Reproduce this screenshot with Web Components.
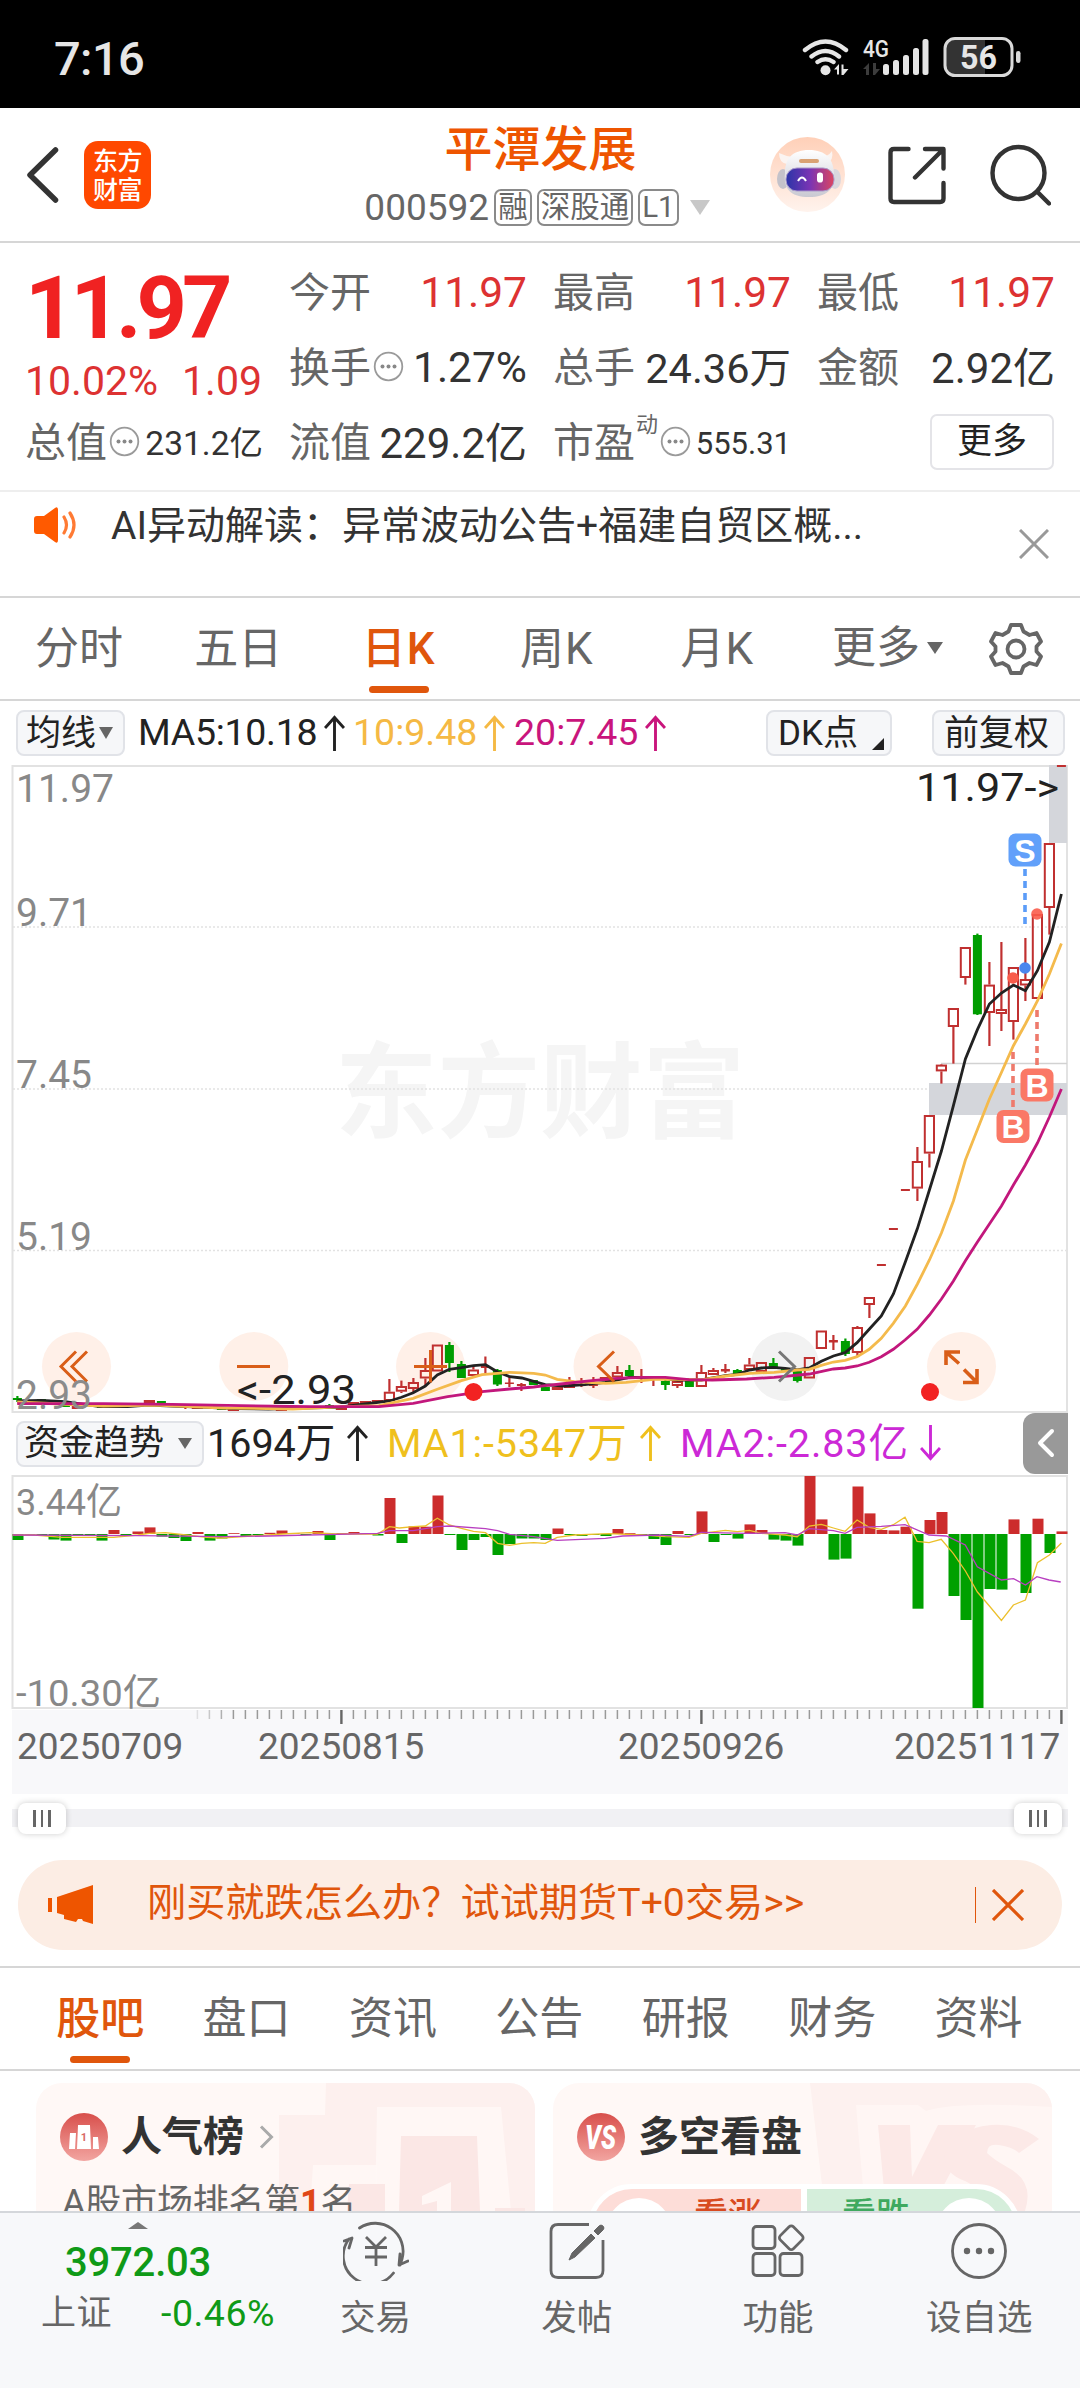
<!DOCTYPE html>
<html lang="zh-CN">
<head>
<meta charset="utf-8">
<title>平潭发展 000592</title>
<style>
  body{margin:0;width:1080px;height:2388px;overflow:hidden;background:#fff;color:#333;
    font-family:Roboto,"Noto Sans CJK SC",sans-serif;font-size:37px;line-height:1;
    display:flex;flex-direction:column;white-space:nowrap}
</style>
</head>
<body>
<status-bar></status-bar>
<app-header></app-header>
<quote-panel></quote-panel>
<news-strip>AI异动解读：异常波动公告+福建自贸区概...</news-strip>
<period-tabs></period-tabs>
<ma-bar></ma-bar>
<kline-chart></kline-chart>
<flow-bar></flow-bar>
<flow-chart></flow-chart>
<time-axis></time-axis>
<range-slider></range-slider>
<promo-banner>刚买就跌怎么办？试试期货T+0交易&gt;&gt;</promo-banner>
<info-tabs></info-tabs>
<feature-cards></feature-cards>
<bottom-bar></bottom-bar>

<script>
const define=(name,html,after)=>customElements.define(name,class extends HTMLElement{
  connectedCallback(){
    if(this.shadowRoot)return;
    this.attachShadow({mode:'open'}).innerHTML='<style>:host,*{box-sizing:border-box}svg{display:block;flex:none}</style>'+(typeof html==='function'?html(this):html);
    if(after)after(this.shadowRoot,this);
  }
});

define('status-bar',`<style>
:host{display:flex;height:108px;flex:none;background:#000;color:#e6e6e6;align-items:center;justify-content:space-between;padding:9px 58px 0 54px}
.t{font-size:47px;font-weight:500;letter-spacing:-.6px}
svg{margin-bottom:3px}
</style><span class="t">7:16</span>
<svg width="222" height="50" viewBox="800 32 222 50" fill="none">
<g stroke="#e6e6e6" stroke-width="4.4" stroke-linecap="round"><path d="M805 50Q825.500 33 846 50M811.500 56.500Q825.500 45.500 839 56.500M817.500 62Q825.500 56.500 833.500 62"/></g>
<circle cx="825.500" cy="70.300" r="5" fill="#e6e6e6"/>
<path d="M834 69.500l5-5.500v10.500h-2V69.500zM841.500 64.500h2v4.500h5l-5 6h-2z" fill="#e6e6e6"/>
<text x="863" y="56.500" font-size="24" font-weight="500" fill="#e6e6e6" textLength="26" lengthAdjust="spacingAndGlyphs" font-family="Roboto">4G</text>
<path d="M863 69l6-6v12h-3v-6zM873 63h3v6h4l-5 6h-2z" fill="#3c3c3c"/>
<g fill="#e6e6e6"><rect x="883" y="64" width="6" height="11" rx="2.500"/><rect x="893" y="60" width="6" height="15" rx="2.500"/><rect x="903" y="55" width="6" height="20" rx="2.500"/><rect x="913" y="48" width="6" height="27" rx="2.500"/><rect x="922.500" y="39" width="6" height="36" rx="2.500"/></g>
<path d="M953 40h32v34h-32q-8 0-8-8V48q0-8 8-8z" fill="#333"/>
<rect x="945" y="38.500" width="67" height="37" rx="10" stroke="#d9d9d9" stroke-width="3"/>
<rect x="1016" y="51" width="4.500" height="12" rx="2.200" fill="#d9d9d9"/>
<text x="960" y="69" font-size="34" font-weight="700" fill="#e6e6e6" textLength="37" lengthAdjust="spacingAndGlyphs" font-family="Roboto">56</text></svg>`);

define('app-header',`<style>
:host{display:flex;height:135px;flex:none;border-bottom:2px solid #d6d6d6;justify-content:space-between;align-items:center;padding:0 28px 0 26px}
.l,.r{display:flex;align-items:center}
.l{gap:25px;width:300px}.r{width:282px;gap:41px;margin-left:34px}
.logo{width:67px;height:68px;border-radius:14px;background:#ff4800;color:#fff;font:500 25px/29px "Noto Sans CJK SC",sans-serif;text-align:center;padding-top:4px;letter-spacing:-.5px}
.c{flex:1;display:flex;flex-direction:column;align-items:center;padding-left:28px}
.n{font-size:48px;font-weight:500;color:#ee5500;height:66px;line-height:54px;margin-right:9px}
.s{display:flex;gap:5px;align-items:center;color:#666;height:38px;font-size:37px;margin-right:16px}
.s b{font-weight:400;border:2px solid #8a8a8a;border-radius:7px;font-size:29.500px;height:37px;line-height:33px;padding:0 2px;letter-spacing:0}
.s i{border:10.500px solid transparent;border-top:15px solid #c8c8c8;border-bottom:0;margin-left:6px}
</style>
<div class="l"><svg width="33" height="56" viewBox="0 0 33 56" fill="none" stroke="#333" stroke-width="5.500" stroke-linecap="round" stroke-linejoin="round"><path d="M29.500 3L4 28l25.500 25"/></svg>
<div class="logo"><div>东方</div><div>财富</div></div></div>
<div class="c"><div class="n">平潭发展</div><div class="s"><span>000592</span><b>融</b><b>深股通</b><b>L1</b><i></i></div></div>
<div class="r">
<svg width="75" height="75" viewBox="0 0 75 75"><defs><linearGradient id="a" x2="0" y2="1"><stop stop-color="#ffd0b8"/><stop offset="1" stop-color="#fff3ed"/></linearGradient><linearGradient id="v"><stop stop-color="#2b35a8"/><stop offset=".5" stop-color="#7a34b4"/><stop offset="1" stop-color="#dc4560"/></linearGradient><linearGradient id="h" x2="0" y2="1"><stop stop-color="#fff"/><stop offset="1" stop-color="#c9c9d2"/></linearGradient></defs>
<circle cx="37.500" cy="37.500" r="37.500" fill="url(#a)"/>
<ellipse cx="13" cy="42" rx="6" ry="10" fill="#c4c2ca"/><ellipse cx="65" cy="42" rx="6" ry="10" fill="#d9d7dd"/>
<path d="M9 16q0 10 8 11l6-7q-8-1-14-4zM62 14q2 9-5 12l-7-6q8 0 12-6z" fill="#fbf4f1"/>
<path d="M39 13C22 13 15 22 15 36c-2 16 6 24 24 24s26-8 25-22C64 22 56 13 39 13z" fill="url(#h)"/>
<rect x="29" y="22" width="20" height="4" rx="2" fill="#d9a274"/>
<rect x="16" y="31" width="48" height="23" rx="11" fill="url(#v)" stroke="#a99acb" stroke-width="1"/>
<path d="M28 44q4-7 8 0" fill="none" stroke="#fff" stroke-width="2"/><rect x="47" y="35.500" width="6" height="10" rx="2.800" fill="#fff"/></svg>
<svg width="60" height="60" viewBox="0 0 60 60" fill="none" stroke="#333" stroke-width="4.400" stroke-linecap="round" stroke-linejoin="round"><path d="M22.500 4H8q-3.500 0-3.500 3.500v46Q4.500 57 8 57h46q3.500 0 3.500-3.500V38M39 4h18.500v19.500M57 4.500L29 32.500"/></svg>
<svg width="64" height="62" viewBox="0 0 64 62" fill="none" stroke="#333" stroke-width="4.400" stroke-linecap="round"><circle cx="31.500" cy="29" r="26"/><path d="M51 48.500l11 11"/></svg>
</div>`);

define('info-dot',`<style>:host{display:inline-block;flex:none}</style><svg width="31" height="31" viewBox="0 0 31 31"><circle cx="15.500" cy="15.500" r="13.800" fill="none" stroke="#9a9a9a" stroke-width="1.800"/><g fill="#888"><circle cx="9.500" cy="15.500" r="2"/><circle cx="15.500" cy="15.500" r="2"/><circle cx="21.500" cy="15.500" r="2"/></g></svg>`);

define('quote-cell',e=>`<style>
:host{display:flex;align-items:center;justify-content:space-between}
.k{font-size:41px;color:#666;display:flex;align-items:center}
.v{font-size:${e.getAttribute('size')||42.5}px;color:${e.getAttribute('color')||'#333'};margin-right:-1px}
info-dot{margin:-4px 0 0 2px}
sup{font-size:22px;margin:-38px 0 0 1px;align-self:center;line-height:22px}
</style><span class="k">${e.getAttribute('label')}${e.hasAttribute('sup')?`<sup>${e.getAttribute('sup')}</sup>`:''}${e.hasAttribute('dot')?'<info-dot></info-dot>':''}</span><span class="v"><slot></slot></span>`);

define('quote-panel',`<style>
:host{display:grid;height:249px;flex:none;border-bottom:2px solid #eee;grid-template-columns:repeat(4,237px);column-gap:27px;grid-template-rows:repeat(3,75px);padding:13px 0 0 25px;align-content:start}
.p{grid-row:span 2;color:#dd3232;display:flex;flex-direction:column}
.p b{font-size:88px;color:#f02222;line-height:88px;letter-spacing:-5px;padding-top:8px;white-space:nowrap}
.p div{display:flex;justify-content:space-between;font-size:41px;margin-top:9px}
.m{justify-self:end;align-self:center;width:124px;height:56px;border:2px solid #e4e4e8;border-radius:7px;font-size:35px;display:flex;align-items:center;justify-content:center;margin-top:-4px;color:#222}
</style>
<div class="p"><b>11.97</b><div><span>10.02%</span><span>1.09</span></div></div>
<quote-cell label="今开" color="#dd3232">11.97</quote-cell><quote-cell label="最高" color="#dd3232">11.97</quote-cell><quote-cell label="最低" color="#dd3232">11.97</quote-cell>
<quote-cell label="换手" dot>1.27%</quote-cell><quote-cell label="总手" size="41.500">24.36万</quote-cell><quote-cell label="金额" size="42">2.92亿</quote-cell>
<quote-cell label="总值" dot size="33.500">231.2亿</quote-cell><quote-cell label="流值" size="42">229.2亿</quote-cell><quote-cell label="市盈" sup="动" dot size="31">555.31</quote-cell>
<div class="m">更多</div>`);

define('news-strip',`<style>
:host{display:flex;height:106px;flex:none;border-bottom:2px solid #d6d6d6;padding:0 31px 0 34px;align-items:flex-start}
span{flex:1;font-size:39px;line-height:68px;margin-left:33px}
.i{margin-top:15px}.x{margin-top:37px}
</style><svg class="i" width="44" height="36" viewBox="0 0 44 36"><path d="M3 9h7L21 1q3-2 3 2v30q0 4-3 2L10 27H3q-3 0-3-3V12q0-3 3-3z" fill="#ff5a00"/><path d="M30 10q5 8 0 16M36 6q8 12 0 24" fill="none" stroke="#ff7a33" stroke-width="3.200" stroke-linecap="round"/></svg><span><slot></slot></span>
<svg class="x" width="30" height="30" viewBox="0 0 30 30" stroke="#999" stroke-width="3"><path d="M1 1l28 28M29 1L1 29"/></svg>`);

define('tab-item',e=>`<style>
:host{display:flex;flex-direction:column;align-items:center;color:#666;font-size:44px;position:relative;justify-content:center}
:host([on]){color:#e0560c;font-weight:${e.getAttribute('w')||400}}
i{display:none;position:absolute;bottom:6px;width:60px;height:7px;border-radius:4px;background:#e0560c}
:host([on]) i{display:block}
</style><span><slot></slot></span><i></i>`);

define('period-tabs',`<style>
:host{display:flex;height:103px;flex:none;border-bottom:2px solid #d6d6d6}
tab-item{width:160.500px}
tab-item:nth-of-type(1){width:158px}
tab-item:nth-of-type(n+4){padding-right:5px}
tab-item:nth-of-type(n+3){letter-spacing:1px}
.m{width:189px;display:flex;align-items:center;padding:0 0 1px 32px;font-size:44px;color:#666}
.m i{border:8px solid transparent;border-top:12px solid #666;border-bottom:0;margin-left:7px}
.g{margin:24px 0 0 0}
</style><tab-item>分时</tab-item><tab-item>五日</tab-item><tab-item on w="500">日K</tab-item><tab-item>周K</tab-item><tab-item>月K</tab-item><div class="m">更多<i></i></div>
<svg class="g" width="54" height="54" viewBox="-27 -27 54 54" fill="none" stroke="#666" stroke-width="3.800" stroke-linejoin="round"><path d="M-5-24H5L7.500-17.500 13.500-14 20.500-16 25-7.500 20.500-2.500V2.500L25 7.500 20.500 16 13.500 14 7.500 17.500 5 24H-5L-7.500 17.500-13.500 14-20.500 16-25 7.500-20.500 2.500V-2.500L-25-7.500-20.500-16-13.500-14-7.500-17.500Z"/><circle r="8.500"/></svg>`);

define('chip-box',`<style>
:host{display:flex;align-items:center;height:46px;border:2px solid #e1e3e8;border-radius:8px;background:#f6f7f9;font-size:35px;color:#222;padding:0 8px;flex:none}
</style><slot></slot>`);

const arrow=(c,down)=>`<svg width="21" height="36" viewBox="0 0 21 36" fill="none" stroke="${c}" stroke-width="2.900" ${down?'style="transform:scaleY(-1)"':''}><path d="M10.500 36V3M1 13l9.500-10.500L20 13"/></svg>`;

define('ma-bar',`<style>
:host{display:flex;height:64px;flex:none;align-items:center;padding-left:16px;padding-right:15px}
.a{width:109px}.a i{border:7.500px solid transparent;border-top:12px solid #666;border-bottom:0;margin-left:3px}
span{display:flex;align-items:center;gap:7px;font-size:37.500px}
.b{width:126px;margin-left:auto;padding-left:10px;position:relative}
.b i{position:absolute;right:6px;bottom:4px;border:6px solid #222;border-left-color:transparent;border-top-color:transparent}
.c{width:133px;margin-left:40px;padding-left:10px}
</style><chip-box class="a">均线<i></i></chip-box>
<span style="color:#222;margin-left:13px;width:204px;letter-spacing:-.3px">MA5:10.18${arrow('#222')}</span><span style="margin-left:11px;width:151px;color:#f5b944">10:9.48${arrow('#f5b944')}</span><span style="margin-left:10px;color:#c9157c">20:7.45${arrow('#c9157c')}</span>
<chip-box class="b">DK点<i></i></chip-box><chip-box class="c">前复权</chip-box>`);

const X=i=>+(17.4+12*i).toFixed(1);
const RED='#c03030',GREEN='#009d00';
/* candle rows: index, kind (r hollow, g filled, c thin cross), body top, body bottom, high, low */
const candles=[[0,'g',1398,1400,1396,1402],[2,'g',1399,1401],[4,'g',1405,1407],[5,'r',1406,1408],[7,'g',1406,1408],[8,'r',1405,1408],[11,'r',1400,1403],[12,'g',1401,1403],[14,'c',1405,1407,1404,1409],[15,'r',1406,1408],[16,'g',1406,1408],[17,'g',1407,1410],[18,'r',1408,1411],[20,'g',1408,1409],[22,'r',1408,1410],[26,'g',1405,1407,1404,1408],[27,'r',1407,1410],[28,'r',1402,1404],[29,'r',1401,1404],[30,'r',1400,1403],
[31,'r',1391.7,1401,1379],[32,'r',1386,1391.7,1380.6,1393],[33,'r',1382,1389,1378,1392],[34,'r',1370,1378.5,1358,1386],[35,'r',1344.5,1371.5],[36,'g',1345,1363,1342,1372],[37,'g',1364,1378,1361],[38,'r',1369.5,1376,1366,1378],[39,'c',1366,1368,1356.500,1373],[40,'g',1370,1384.5,1369,1386],[41,'c',1382.5,1384,1377,1387],[42,'c',1384,1386,1383,1391],[43,'g',1380,1385],
[44,'g',1387,1391],[45,'r',1386.7,1390],[46,'r',1385,1388,1377],[47,'c',1384,1385.5,1378,1387],[48,'c',1383,1386,1377,1388],[49,'r',1377,1381],[50,'r',1372,1377.5,1366],[51,'g',1370,1376,1365,1378],[52,'c',1376,1378,1369,1383],[53,'c',1379,1380,1377,1386],[54,'g',1381,1385,1380,1390],[55,'r',1381,1386,1379,1388],[56,'g',1381,1387],[57,'r',1372,1387,1365],[58,'r',1370,1375,1368],[59,'c',1369,1371.5,1364,1373],[60,'g',1370,1374,1369],[61,'r',1364.5,1370,1358],[62,'r',1362,1372],[63,'g',1363,1369,1358],[64,'g',1368,1371],[65,'g',1371,1381,1370,1382.5],[66,'r',1357,1378.5],[67,'r',1330.5,1349],[68,'c',1340,1342.5,1335,1350],[69,'g',1341,1354,1338.5,1356],[70,'r',1327,1353,1326,1356],[71,'r',1297,1305,1297,1318],[72,'c',1264,1266],[73,'c',1228,1230],[74,'c',1189,1191],[75,'r',1161,1188.6,1147,1201],[76,'r',1115,1153.6,1115,1167.5],[77,'r',1064.6,1071.4,1064,1083.6],[78,'r',1008,1027,1008,1063.6],[79,'r',947,978,947,984.6],[80,'g',935,1014.3,933.6,1015],[81,'r',984.6,1013,962,1046],[82,'r',1009,1014,942,1031],[83,'r',967,1022,967,1039.6],[84,'r',979,985.5,938,1001],[85,'r',914,999],[86,'r',843,908,843,934.6],[87,'c',765,767]];
const drawCandle=([i,k,t,b,h=t,l=b])=>{
  const x=X(i),c=k==='g'?GREEN:RED;let s='';
  if(k==='r'){
    if(h<t)s+=`<path d="M${x} ${h}V${t}" stroke="${c}" stroke-width="2.2"/>`;
    if(l>b)s+=`<path d="M${x} ${b}V${l}" stroke="${c}" stroke-width="2.2"/>`;
    s+=`<rect x="${x-4.6}" y="${t+1}" width="9.2" height="${Math.max(b-t-2,1)}" fill="none" stroke="${c}" stroke-width="2"/>`;
  }else{
    if(l>b||h<t)s+=`<path d="M${x} ${h}V${l}" stroke="${c}" stroke-width="2.2"/>`;
    s+=`<rect x="${x-4.5}" y="${t}" width="9" height="${b-t}" fill="${c}"/>`;
  }
  return s;
};
const L=(z,k=2.904)=>z.map(([a,b])=>[a/k,1290+b/3]);
const R=z=>z.map(([a,b])=>[540+a/2.904,1290+b/3]);
const from=(i,ys)=>ys.map((y,n)=>[X(i+n),y]);
const pts=a=>a.map(p=>p.map(v=>v.toFixed(1)).join()).join(' ');
const ma5=[...L([[50,333],[120,331],[190,335],[290,350],[370,350],[430,345],[500,348],[600,352],[680,356],[780,357],[870,354],[980,352],[1060,342],[1131,333],[1166,322],[1200,308],[1235,288],[1270,255],[1305,238],[1340,233],[1375,227],[1410,224],[1445,246],[1480,260],[1515,264],[1550,274]]),
...R([[15,284],[70,288],[130,284],[190,277],[260,262],[330,262],[400,270],[468,270],[538,257],[573,253],[608,240],[643,234],[678,232],[712,235],[747,240],[782,234],[817,214],[852,198],[886,188],[921,158],[956,118],[991,78]]),...from(73,[1294,1261.8,1228.6,1190,1151,1105.7,1059,1029.6,1004,993,985,990.7,970.7,942,894])];
const ma10=[...L([[50,336],[300,348],[450,345],[650,354],[850,357],[1000,350],[1100,347],[1200,325],[1270,298],[1340,272],[1400,254],[1480,247],[1550,250]]),...R([[15,255],[50,268],[100,275],[190,280],[250,277],[330,268],[400,268],[468,270],[540,258],[610,250],[680,247],[747,240],[782,238],[817,226],[852,216],[886,211],[921,200],[956,178],[991,145],[1026,100]]),...from(74,[1306,1284,1260,1233,1201,1160,1129.6,1099,1072.5,1045.7,1024,1001,974,943.6])];
const ma20=[...L([[50,341],[300,341],[500,343],[700,347],[900,350],[1100,350],[1200,340],[1300,320],[1400,305],[1480,297],[1550,291]]),...R([[15,287],[60,282],[150,272],[224,265],[294,262],[364,262],[433,269],[500,270],[600,267],[680,262],[782,252],[852,237],[886,234],[921,228],[956,217],[991,200],[1026,178],[1060,150],[1095,118]]),...from(76,[1315,1299,1281,1260.7,1242,1224,1206,1185,1165,1143,1117,1089])];
const T=(x,y,w,s,fill,size=39,extra='')=>`<text x="${x}" y="${y}" textLength="${w}" lengthAdjust="spacingAndGlyphs" font-size="${size}" fill="${fill}" ${extra}>${s}</text>`;
const badge=(x,y,c,s,w=33)=>`<rect x="${x-w/2}" y="${y-16.5}" width="${w}" height="33" rx="7" fill="${c}"/><text x="${x}" y="${y+11.5}" font-size="32" font-weight="700" font-family="Liberation Sans" fill="#fff" text-anchor="middle">${s}</text>`;
const grid=[927,1089,1250.5].map(y=>`<path d="M13 ${y}H1067" stroke="#e2e2e2" stroke-width="1.5" stroke-dasharray="2 2"/>`).join('');

define('kline-chart',()=>`<style>:host{display:block;height:648px;flex:none}</style>
<svg width="1080" height="648" viewBox="0 765 1080 648" fill="none">
${T(335,1130,410,'东方财富','#f5f5f5',104,'font-weight="700"')}
${grid}
<path d="M12.500 766H1067V1412H12.500Z" stroke="#e2e2e2" stroke-width="2"/>
<path d="M941 1063.500H1067" stroke="#d2d2d2" stroke-width="1.500"/>
<path d="M1049 765h18v78h-18zM929 1083h138v32H929z" fill="#d4d6db"/>
${[76.5,253.8,430.5,608,785,961.5].map((x,i)=>`<circle cx="${x}" cy="1366.500" r="34.500" fill="${i===4?'#f2f2f2':'#fff0e8'}"/>`).join('')}
${T(16,802,98,'11.97','#888')}${T(16,926,76,'9.71','#888')}${T(16,1088,76,'7.45','#888')}${T(16,1250,76,'5.19','#888')}
${candles.map(drawCandle).join('')}
<polyline points="${pts(ma5)}" stroke="#222" stroke-width="2.800"/>
<polyline points="${pts(ma10)}" stroke="#f4ba4c" stroke-width="2.800"/>
<polyline points="${pts(ma20)}" stroke="#c2177c" stroke-width="2.800"/>
<g stroke="#d95e18" stroke-width="3"><path d="M76 1351.500L61 1366.500l15 15M87 1351.500L72 1366.500l15 15M237 1366.500h33M414 1366.500h33M430.500 1350v32.500M614 1351.500L598.500 1366.500l15.500 15"/><path d="M779 1351.500L794.500 1366.500l-15.500 15" stroke="#777"/><path d="M946 1365v-13h14M947 1353l12 10.500M977 1369v13.500h-14M976 1381.500l-12-12" stroke-width="3.600"/></g>
<circle cx="473.500" cy="1392" r="9" fill="#f22222"/><circle cx="930" cy="1392" r="9" fill="#f22222"/>
${T(16,1409,76,'2.93','#8b8b8b',41)}
${T(237,1404,119,'&lt;-2.93','#222',41)}
${T(916,801,143,'11.97-&gt;','#222',39)}
<g stroke-width="3.600" stroke-dasharray="7 5"><path d="M1025 869v56" stroke="#5b9cf8"/><path d="M1037 1010v57M1013 1052v57" stroke="#ee7a6c"/></g>
<circle cx="1025" cy="968" r="5.800" fill="#4a86ee"/><circle cx="1013" cy="978" r="5.800" fill="#f95c4b"/><circle cx="1037" cy="914" r="5.800" fill="#f95c4b" fill-opacity=".9"/>
${badge(1025,850,'#61a0fa','S')}${badge(1037,1085,'#fa7866','B')}${badge(1013,1126.5,'#fa7866','B')}
</svg>`);

define('flow-bar',`<style>
:host{display:flex;height:62px;flex:none;align-items:center;padding-left:16px;padding-bottom:1px}
.a{width:188px;padding-left:6px}.a i{border:7px solid transparent;border-top:11px solid #666;border-bottom:0;margin-left:14px}
span{display:flex;align-items:center;justify-content:space-between;font-size:39.500px}
span+span{letter-spacing:.9px}
svg{margin-top:-1px}
.k{width:45px;height:61px;border-radius:12px 0 0 12px;background:#999;margin:0 12px 0 auto;display:flex;align-items:center;justify-content:center}
</style><chip-box class="a">资金趋势<i></i></chip-box>
<span style="color:#222;margin-left:3px;width:161px">1694万${arrow('#222')}</span><span style="margin-left:19px;width:274px;color:#efc01d">MA1:-5347万${arrow('#efc01d')}</span><span style="margin-left:19px;width:261px;color:#cc29d6">MA2:-2.83亿${arrow('#cc29d6',1)}</span>
<div class="k"><svg width="18" height="30" viewBox="0 0 18 30" fill="none" stroke="#fff" stroke-width="4" stroke-linecap="round" stroke-linejoin="round"><path d="M15 3L3 15l12 12"/></svg></div>`);

/* signed bar extents in pixels from the zero line; positive is inflow */
const flow=[-6,-.6,-2,-5.500,-6.600,-2,-2,-6.600,4,-1,2.500,6.600,-2.600,-4,-7,2,-6.600,-4.500,.8,-2,-1,1.200,3.500,.8,-1,3,-6,.8,2,.8,-1.500,36,-9,7.600,7.300,38.500,-1,-16,-6,-3,-21,-10,-4.500,-4.500,
-6,5.500,-1,-2,-1,-2,5,.8,-1.600,-5,-11,3,-1,22.600,-8,-1,-4.600,9.600,4,-5.600,-6.600,-11.600,58,14.600,-25.600,-24.600,47.500,20.600,4,3.600,7.300,-74.700,14,22,-62,-86,-174,-55,-55.600,14.600,-59,15.300,-19,2.600];
const fy=[...L([[37,735],[100,735],[180,742],[250,742],[330,742],[400,735],[434,730],[480,728],[540,735],[600,742],[640,744],[730,738],[820,732],[900,728],[980,732],[1096,732],[1131,710],[1160,714],[1200,710],[1235,708],[1270,685],[1305,705],[1340,715],[1375,724],[1410,728],[1445,760],[1480,766],[1515,760],[1550,758]]),...R([[15,760],[50,742],[100,735],[200,731],[300,735],[364,740],[433,742],[468,730],[538,721],[573,725],[608,721],[643,730],[712,735],[747,740],[782,708],[817,703],[852,714],[886,724],[921,690],[956,712],[991,718],[1026,704],[1060,682],[1095,754],[1130,758],[1165,748],[1200,790]]),...from(79,[1571,1592,1606,1620.5,1605,1600,1562.7,1555,1543])];
const fp=[...L([[37,735],[400,737],[650,740],[780,738],[1096,730],[1131,722],[1200,722],[1270,710],[1305,708],[1410,716],[1445,722],[1480,733],[1550,740]]),...R([[50,751],[190,745],[240,738],[340,735],[433,739],[468,727],[600,730],[712,728],[747,735],[782,716],[852,722],[886,730],[921,712],[991,709],[1060,704],[1130,735],[1180,738],[1235,765],[1270,830],[1340,870],[1375,866],[1410,885],[1443,860],[1478,870],[1512,876]])];
define('flow-chart',()=>`<style>:host{display:block;height:235px;flex:none}</style>
<svg width="1080" height="235" viewBox="0 1475 1080 235" fill="none">
<path d="M12.500 1476H1067V1708H12.500Z" stroke="#e2e2e2" stroke-width="2"/>
${flow.map((v,i)=>`<rect x="${(X(i)-4.9).toFixed(1)}" y="${v>0?1534-v:1534}" width="11" height="${Math.abs(v)}" fill="${v>0?'#cc2c2c':'#00a000'}"/>`).join('')}
<polyline points="${pts(fy)}" stroke="#ecc02c" stroke-width="1.300"/>
<polyline points="${pts(fp)}" stroke="#b83fc0" stroke-width="1.300"/>
${T(16,1515,106,'3.44亿','#888',37)}${T(16,1706,145,'-10.30亿','#888',37)}
</svg>`);

define('time-axis',()=>{
  let t='';for(let i=15;i<88;i++){const big=i===27||i===57||i===87;
    t+=`<path d="M${X(i)} 0v${big?14:9}" stroke="${big?'#666':'#999'}" stroke-width="${big?2.4:1.5}" opacity="${i<18?.25+(i-15)*.25:1}"/>`}
  return `<style>:host{display:block;height:84px;flex:none;margin:0 12px;background:#f8f8fa}
.d{display:flex;font-size:37px;color:#666;padding-left:5px;margin-top:4px}
.d span+span{margin-left:75px}.d span+span+span{margin-left:194px}.d span+span+span+span{margin-left:110px}
.d span{width:166px}</style>
<svg width="1056" height="14" viewBox="12 0 1056 14">${t}</svg><div class="d"><span>20250709</span><span>20250815</span><span>20250926</span><span>20251117</span></div>`});

define('range-slider',`<style>
:host{display:flex;height:49px;flex:none;margin:0 12px;align-items:center;background:linear-gradient(#f1f1f4,#f1f1f4) 0 15px/100% 18px no-repeat;justify-content:space-between;padding:0 6px;margin-top:0}
div{width:48px;height:31px;border-radius:8px;background:#fff;box-shadow:0 0 6px #0003;display:flex;gap:5px;align-items:center;justify-content:center}
i{width:2.500px;height:17px;background:#666}
</style><div><i></i><i></i><i></i></div><div><i></i><i></i><i></i></div>`);

define('promo-banner',`<style>
:host{display:flex;height:90px;flex:none;margin:17px 18px;border-radius:45px;background:#fcede4;align-items:center;color:#e0560c;font-size:39.200px;padding:0 38px 0 30px}
span{flex:1;margin:-2px 0 0 53px}
i{width:1.500px;height:36px;background:#e0560c;margin-right:16px}
</style><svg width="46" height="40" viewBox="0 0 46 40" fill="#ee5500"><path d="M0 13h4v14H0zM9 12L45 0v39l-10-3-1-2h-4l-2 3-12-3v-4l-7-2z"/></svg><span><slot></slot></span><i></i>
<svg width="32" height="32" viewBox="0 0 32 32" stroke="#e0560c" stroke-width="3.200"><path d="M1 1l30 30M31 1L1 31"/></svg>`);

define('info-tabs',`<style>
:host{display:flex;height:105px;flex:none;border-top:2px solid #d6d6d6;border-bottom:2px solid #d6d6d6;padding-left:27px;margin-top:-1px}
tab-item{width:146.400px}
</style><tab-item on w="500">股吧</tab-item><tab-item>盘口</tab-item><tab-item>资讯</tab-item><tab-item>公告</tab-item><tab-item>研报</tab-item><tab-item>财务</tab-item><tab-item>资料</tab-item>`);

define('feature-card',`<style>
:host{display:block;width:499px;height:128px;overflow:hidden;border-radius:26px 26px 0 0;position:relative;background:#fff8f6}
.bg{position:absolute;inset:0}
.h{position:relative;display:flex;align-items:center;height:48px;margin:30px 0 0 24px;font-size:41px;font-weight:700;color:#333;gap:13px}
.b{position:relative}
</style><div class="bg"><slot name="art"></slot></div><div class="h"><slot name="icon"></slot><slot name="title"></slot></div><div class="b"><slot></slot></div>`);

define('feature-cards',`<style>
:host{display:flex;height:140px;flex:none;padding:12px 0 0 36px;gap:18px;overflow:hidden}
.t{display:flex;align-items:center}.t svg{margin-left:15px}
.r{font-size:36px;color:#666;margin:24px 0 0 26px;letter-spacing:-.2px;display:block}
.r b{color:#e04818}
.v{display:flex;margin:23px 0 0 34px;width:434px;height:90px;border:5px solid #fff;border-radius:48px;overflow:hidden;gap:6px;font-size:34px;font-weight:500;background:#fff}
.v div{flex:1;padding-top:9px;display:flex}
.up{background:#fdddd8;color:#d84a20;padding-left:14px}.dn{background:#d5eedb;color:#3fa95f;justify-content:flex-end;padding-right:14px}
.v i{width:66px;height:66px;border-radius:50%;background:#fff}
.up span{margin:0 0 0 22px}.dn span{margin-right:26px}
</style>
<feature-card><svg slot="art" width="499" height="128" viewBox="0 0 499 128"><path d="M290 0h209v128H342V82H278v46H243V32h46z" fill="#fdf0ee"/><path d="M341 24h124l10 104H341V82h-64l-3 46h65z" fill="#fff7f5"/><path d="M365 53h76l3 75h-81zM313 101h36v27h-38zM459 125h30v3h-30z" fill="#fbe7e5"/><path d="M386 113l29-14v29h-14v-10l-15 4z" fill="#fff7f5"/></svg>
<svg slot="icon" width="48" height="48" viewBox="0 0 48 48"><defs><linearGradient id="g" x2="0" y2="1"><stop stop-color="#d84f4b"/><stop offset="1" stop-color="#f2a5a1"/></linearGradient></defs><circle cx="24" cy="24" r="24" fill="url(#g)"/><path d="M10 20h6l-1 16H9zM18 12h12l1 24H17zM33 24h5l1 12h-6z" fill="#fff"/><text x="24" y="28" font-size="11" font-weight="700" fill="#d96a66" text-anchor="middle">1</text></svg>
<span slot="title" class="t">人气榜<svg width="15" height="24" viewBox="0 0 15 24" fill="none" stroke="#aaa" stroke-width="3"><path d="M2 1.500L12.500 12 2 22.500"/></svg></span>
<span class="r">A股市场排名第<b>1</b>名</span></feature-card>
<feature-card><svg slot="art" width="499" height="128" viewBox="0 0 499 128"><path d="M257 0h242v128H272z" fill="#fdf1ef"/><path d="M303 22h62l8 6q30-10 126-4v104H312z" fill="#fff6f4"/><path d="M325 42h32l2 52 26-52h38l-46 86h-44z" fill="#fce9e7"/><path d="M486 56q-20-16-48-14-38 4-46 30-2 18 20 26 22 10 10 30h50q10-30-18-44-14-8-20-14 0-10 12-8 14 2 20 8z" fill="#fce9e7"/></svg>
<svg slot="icon" width="48" height="48" viewBox="0 0 48 48"><defs><linearGradient id="k" x2="0" y2="1"><stop stop-color="#d84f4b"/><stop offset="1" stop-color="#f2a5a1"/></linearGradient></defs><circle cx="24" cy="24" r="24" fill="url(#k)"/><text x="8" y="36" font-size="33" font-weight="900" font-style="italic" fill="#fff" textLength="31" lengthAdjust="spacingAndGlyphs">VS</text></svg>
<span slot="title" class="t">多空看盘</span>
<div class="v"><div class="up"><i></i><span>看涨</span></div><div class="dn"><span>看跌</span><i></i></div></div></feature-card>`);

define('nav-item',`<style>
:host{display:flex;flex-direction:column;align-items:center;width:201.300px;font-size:35.500px;color:#666;padding-top:8px;gap:20px}
</style><slot name="icon"></slot><span><slot></slot></span>`);
const icon=(p)=>`<svg slot="icon" width="66" height="60" viewBox="-33 -30 66 60" fill="none" stroke="#666" stroke-width="2.800" stroke-linejoin="round">${p}</svg>`;
define('bottom-bar',`<style>
:host{display:flex;height:177px;flex:none;background:#f7f8fa;border-top:2px solid #d4d7db}
.i{width:275px;display:flex;flex-direction:column;color:#0f9a17}
.i i{border:10px solid transparent;border-bottom:7px solid #777;border-top:0;width:0;margin:9px 0 0 128px}
.i b{font-weight:500;font-size:40px;margin:14px 0 0 65px;letter-spacing:-.2px}
.i div{display:flex;font-size:37.500px;margin:12px 0 0 41px;justify-content:space-between;width:234px;align-items:center;letter-spacing:.5px}
.i em{font-style:normal;font-size:35px;color:#666}
</style><div class="i"><i></i><b>3972.03</b><div><em>上证</em><span>-0.46%</span></div></div>
<nav-item>${icon('<path d="M-16.500-23A28 28 0 0 1 26 8L24 14M32 10l-9 4 1-11M17.500 22A28 28 0 0 1-27-12M-32-10l8-3-3 10" stroke-linecap="round"/><path d="M-10-14L0-4 10-14M0-4V15M-11-3.500H11M-11 6H11"/>')}交易</nav-item>
<nav-item>${icon('<path d="M12-26.500H-19q-7 0-7 7v39q0 7 7 7h38q7 0 7-7V-11"/><path d="M-8 9L-5 2 14-17l4 4L-2 6zM17-20l5-5q2-2 4 0t0 4l-5 5z" fill="#666" stroke="#666" stroke-width="1"/>')}发帖</nav-item>
<nav-item>${icon('<rect x="-25" y="-24.500" width="22" height="22" rx="3.500"/><rect x="-25" y="2.500" width="22" height="22" rx="3.500"/><rect x="2" y="2.500" width="22" height="22" rx="3.500"/><rect x="4" y="-22.500" width="18.500" height="18.500" rx="3" transform="rotate(45 13.250 -13.250)"/>')}功能</nav-item>
<nav-item>${icon('<circle r="26.500"/><g fill="#666" stroke="none"><circle cx="-12" r="3.200"/><circle r="3.200"/><circle cx="12" r="3.200"/></g>')}设自选</nav-item>`);
</script>
</body>
</html>
